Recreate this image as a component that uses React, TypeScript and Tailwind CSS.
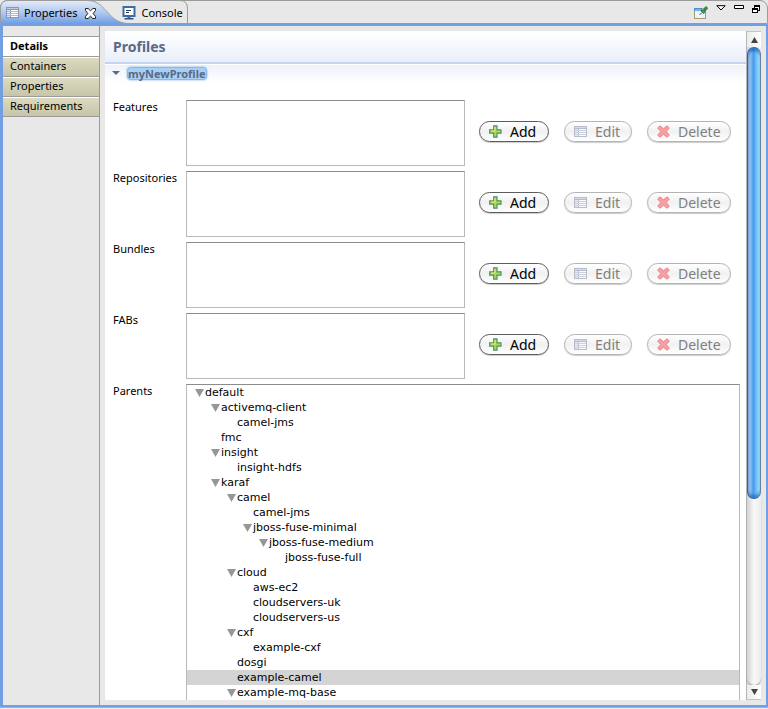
import { useState } from "react";

type Row = { name: string; depth: number; open?: boolean };

const PAGES = ["Details", "Containers", "Properties", "Requirements"];
const FIELDS = ["Features", "Repositories", "Bundles", "FABs"];

const TREE: Row[] = [
  { name: "default", depth: 0, open: true },
  { name: "activemq-client", depth: 1, open: true },
  { name: "camel-jms", depth: 2 },
  { name: "fmc", depth: 1 },
  { name: "insight", depth: 1, open: true },
  { name: "insight-hdfs", depth: 2 },
  { name: "karaf", depth: 1, open: true },
  { name: "camel", depth: 2, open: true },
  { name: "camel-jms", depth: 3 },
  { name: "jboss-fuse-minimal", depth: 3, open: true },
  { name: "jboss-fuse-medium", depth: 4, open: true },
  { name: "jboss-fuse-full", depth: 5 },
  { name: "cloud", depth: 2, open: true },
  { name: "aws-ec2", depth: 3 },
  { name: "cloudservers-uk", depth: 3 },
  { name: "cloudservers-us", depth: 3 },
  { name: "cxf", depth: 2, open: true },
  { name: "example-cxf", depth: 3 },
  { name: "dosgi", depth: 2 },
  { name: "example-camel", depth: 2 },
  { name: "example-mq-base", depth: 2, open: true },
];

function TableIcon() {
  return (
    <svg width="13" height="12" viewBox="0 0 13 12" aria-hidden="true" shapeRendering="crispEdges">
      <rect width="13" height="11" fill="#8c96ac" />
      <rect x="1" y="1" width="11" height="1" fill="#c3cbdb" />
      <rect x="1" y="3" width="3" height="7" fill="#dbe5f8" />
      <rect x="5" y="3" width="7" height="7" fill="#fff" />
      <path d="M1 4.5h11M1 6.5h11M1 8.5h11" stroke="#b4bdce" strokeWidth="1" />
    </svg>
  );
}

function CloseIcon() {
  return (
    <svg width="11" height="11" viewBox="0 0 11 11" aria-hidden="true">
      <path
        d="M.5.5h2.600l2.400 2.300L7.900.5h2.600v2L8.200 5.500l2.300 3v2H7.900L5.500 8.200l-2.400 2.300H.5v-2l2.300-3L.5 2.500z"
        fill="#fff"
        stroke="#222"
      />
    </svg>
  );
}

function MonitorIcon() {
  return (
    <svg width="14" height="14" viewBox="0 0 14 14" aria-hidden="true">
      <rect x="1.500" y="1" width="11" height="9" fill="#fff" stroke="#3c6ba5" strokeWidth="2" />
      <path d="M4 4.500h5M4 6.500h3" stroke="#26374f" />
      <path d="M5.500 11h3v1h-3z" fill="#3c6ba5" />
      <path d="M2.500 12h9v1.500h-9z" fill="#31507c" />
    </svg>
  );
}

function PinIcon() {
  return (
    <svg width="15" height="14" viewBox="0 0 15 14" aria-hidden="true">
      <rect x="1.500" y="2.500" width="11" height="10" fill="#e2f4ff" stroke="#a99b6c" />
      <path d="M1 2h8v3H1z" fill="#4d90d6" />
      <path d="M2 4h6" stroke="#a6d0f5" />
      <path d="M3 6.500l5 4.500" stroke="#fff" strokeWidth="1.500" />
      <path d="M6.500 9L9 6.500" stroke="#555" />
      <path d="M8 4.800l1.500-1 1.800.1L12 1.500 13 .5l1.500 1.500-.8 1.600-2 .8.200 1.800-1.200 1.300z" fill="#3f9f4c" stroke="#1d6b35" strokeWidth=".9" />
    </svg>
  );
}

function PlusIcon() {
  return (
    <svg width="13" height="13" viewBox="0 0 13 13" aria-hidden="true">
      <path d="M4.700.8h3.300v4h4v3.400H8v4H4.700v-4h-4V4.800h4z" fill="#b9d54c" stroke="#45976a" strokeWidth="1.200" />
      <path d="M5.900 2v4H2" fill="none" stroke="#e3ec84" />
    </svg>
  );
}

function CrossIcon() {
  return (
    <svg width="13" height="13" viewBox="0 0 13 13" aria-hidden="true">
      <path
        d="M3 .8l3.500 3L10 .8 12.300 3 9.200 6.500l3.100 3.700L10 12.200 6.500 9.300 3 12.200.7 10.200l3.100-3.700L.7 3z"
        fill="#f5a0a4"
        stroke="#e67a82"
        strokeWidth=".9"
      />
    </svg>
  );
}

function Triangle({ className }: { className: string }) {
  return (
    <svg className={className} viewBox="0 0 9 8" preserveAspectRatio="none" aria-hidden="true">
      <path d="M0 0h9L4.500 8z" fill="currentColor" />
    </svg>
  );
}

const pill =
  "flex h-[21px] items-center gap-[8px] rounded-full border pl-[9px] text-[14px] leading-[19px] shadow-[0_1px_1px_rgba(0,0,0,0.2)] bg-linear-to-b from-white via-[#f1f1f1] to-white";

function ListField({ label }: { label: string }) {
  const id = `field-${label}`;
  return (
    <div className="flex items-start">
      <label htmlFor={id} className="w-[73px] shrink-0 leading-[13px]">
        {label}
      </label>
      <textarea
        id={id}
        className="h-[66px] min-w-0 flex-1 resize-none border border-[#b9b9b9] border-t-[#8c8c8c] bg-white outline-none"
      />
      <div className="ml-[14px] mr-[15px] mt-[21px] flex gap-[15px]">
        <button className={`${pill} w-[70px] border-[#5c5c5c]`}>
          <PlusIcon />
          Add
        </button>
        <button disabled className={`${pill} w-[68px] border-[#b4b4b4] text-[#808080]`}>
          <span className="opacity-60">
            <TableIcon />
          </span>
          Edit
        </button>
        <button disabled className={`${pill} w-[84px] border-[#b4b4b4] text-[#808080]`}>
          <CrossIcon />
          Delete
        </button>
      </div>
    </div>
  );
}

function ParentTree() {
  const [selected, setSelected] = useState(19);
  return (
    <ul
      role="tree"
      aria-label="Parents"
      className="mr-[6px] min-w-0 flex-1 overflow-hidden border border-b-0 border-[#b9b9b9] border-t-[#8c8c8c] font-['DejaVu_Sans',sans-serif]"
    >
      {TREE.map((row, i) => (
        <li
          key={i}
          role="treeitem"
          aria-level={row.depth + 1}
          aria-expanded={row.open}
          aria-selected={i === selected}
          onClick={() => setSelected(i)}
          className={`flex h-[15px] items-center leading-[15px] ${i === selected ? "bg-[#d4d4d4]" : ""}`}
          style={{ paddingLeft: 8 + row.depth * 16 }}
        >
          <span className="w-[10px] shrink-0">
            {row.open && <Triangle className="h-[8px] w-[9px] text-[#969696]" />}
          </span>
          {row.name}
        </li>
      ))}
    </ul>
  );
}

function ScrollBar() {
  return (
    <div className="flex w-[15px] shrink-0 flex-col border-l border-[#b5b5b5] bg-linear-to-r from-[#d2d2d2] via-[#f8f8f8] to-[#ececec]">
      <button aria-label="Scroll up" className="flex h-4 shrink-0 items-center justify-center border-t border-[#c4c4c4] bg-linear-to-r from-[#ececec] to-white text-[#444]">
        <Triangle className="h-[6px] w-[7px] rotate-180" />
      </button>
      <div className="flex-[451] rounded-full border border-[#2b62ae] border-r-[#6b7f95] bg-linear-to-r from-[#8fbcee] from-20% via-[#419bf0] via-45% to-[#a6ecff] shadow-[inset_0_4px_3px_-1px_rgba(15,75,165,0.6),inset_0_-4px_3px_-1px_rgba(15,75,165,0.5)]" />
      <div className="flex-[187] rounded-b-full shadow-[0_1px_1px_#999]" />
      <button aria-label="Scroll down" className="flex h-[15px] shrink-0 items-center justify-center border-b border-[#c4c4c4] bg-linear-to-r from-[#ececec] to-white text-[#444]">
        <Triangle className="h-[6px] w-[7px]" />
      </button>
    </div>
  );
}

function TabBar() {
  return (
    <header className="relative flex h-[24px] shrink-0 items-center rounded-t-lg border border-[#9b9b9b]">
      <svg className="absolute -left-px -top-px" width="190" height="26" viewBox="0 0 190 26" aria-hidden="true">
        <defs>
          <linearGradient id="tab" x1="0" y1="0" x2="0" y2="1">
            <stop offset="0" stopColor="#e3ebf8" />
            <stop offset="0.500" stopColor="#abc5ef" />
            <stop offset="0.900" stopColor="#729fe4" />
          </linearGradient>
        </defs>
        <path d="M1 26V7Q1 1 8 1h79c10 0 14 5 19 10s9 11 21 12.500V26z" fill="url(#tab)" />
        <path d="M.5 24V7Q1 .5 8 .5h79c10 0 14 5 19 10s9 12 21 13" fill="none" stroke="#9b9b9b" />
        <path d="M180 .5q7.500 0 7.500 8V23" fill="none" stroke="#9b9b9b" />
      </svg>
      <nav className="relative flex h-full items-center pt-[2px]">
        <a href="#properties" className="ml-[5px] flex items-center gap-[5px]">
          <TableIcon />
          Properties
        </a>
        <button aria-label="Close" className="ml-[8px]">
          <CloseIcon />
        </button>
        <a href="#console" className="ml-[26px] flex items-center gap-[5px]">
          <MonitorIcon />
          Console
        </a>
      </nav>
      <div className="relative ml-auto mr-[6px] flex h-full items-start gap-[8px] pt-[4px]">
        <button aria-label="Pin view" className="pt-[1px]">
          <PinIcon />
        </button>
        <button aria-label="View menu">
          <svg width="10" height="6" viewBox="0 0 10 6" aria-hidden="true">
            <path d="M.8.7h8.400L5 5z" fill="#fff" stroke="#000" />
          </svg>
        </button>
        <button aria-label="Minimize">
          <svg width="10" height="5" viewBox="0 0 10 5" aria-hidden="true">
            <path d="M.5.5h9v3h-9z" fill="#fff" stroke="#000" />
          </svg>
        </button>
        <button aria-label="Restore">
          <svg width="9" height="9" viewBox="0 0 9 9" aria-hidden="true" shapeRendering="crispEdges">
            <path d="M2 0h6v6H2z" />
            <path d="M3 2h4v3H3z" fill="#fff" />
            <path d="M0 3h6v5H0z" />
            <path d="M1 5h4v2H1z" fill="#fff" />
          </svg>
        </button>
      </div>
    </header>
  );
}

export default function App() {
  const [page, setPage] = useState(0);
  return (
    <div className="flex h-screen flex-col overflow-hidden bg-[#e8e8e8] font-['Noto_Sans','Open_Sans',sans-serif] text-[11px] text-black">
      <TabBar />
      <div className="flex min-h-0 flex-1 border-2 border-l-3 border-[#729fe4]">
        <nav className="flex w-[97px] shrink-0 flex-col border-r border-[#9b9b9b] pt-[10px]">
          {PAGES.map((name, i) => (
            <button
              key={name}
              onClick={() => setPage(i)}
              className={`h-[20px] border-t border-[#9b9b9b] pb-[2px] pl-[7px] text-left leading-[15px] ${
                i === page
                  ? "bg-white font-bold"
                  : "bg-linear-to-b from-[#dddcc0] to-[#c6c5a9] shadow-[inset_0_1px_0_#fff]"
              }`}
            >
              {name}
            </button>
          ))}
          <div className="border-t border-[#9b9b9b]" />
        </nav>
        <div className="mx-[5px] mb-[5px] mt-[5px] flex min-w-0 flex-1">
          <main className="flex min-w-0 flex-1 flex-col bg-white">
            <h1 className="h-[31px] shrink-0 bg-linear-to-b from-white to-[#e9effa] pl-[8px] text-[14px] font-bold leading-[31px] text-[#5a6a84]">
              Profiles
            </h1>
            <div className="h-[2px] shrink-0 bg-[#c4d5f2]" />
            <h2 className="flex h-[19px] shrink-0 items-center gap-[8px] border-t border-white bg-linear-to-b from-[#edf2fb] to-white pb-[2px] pl-[7px] text-[#5a6a84]">
              <Triangle className="h-[4px] w-[8px]" />
              <button className="rounded-[3px] bg-[#a9cff2] font-bold leading-[11px] shadow-[0_0_2px_1px_#5fa3e0]">
                myNewProfile
              </button>
            </h2>
            <div className="flex min-h-0 flex-1 flex-col gap-[5px] pl-[8px] pt-[17px]">
              {FIELDS.map((f) => (
                <ListField key={f} label={f} />
              ))}
              <div className="flex min-h-0 flex-1">
                <span className="w-[73px] shrink-0 leading-[13px]">Parents</span>
                <ParentTree />
              </div>
            </div>
          </main>
          <ScrollBar />
        </div>
      </div>
      <div className="h-[2px] shrink-0 border-t border-[#b0b0b0] bg-[#eeeeee]" />
    </div>
  );
}
